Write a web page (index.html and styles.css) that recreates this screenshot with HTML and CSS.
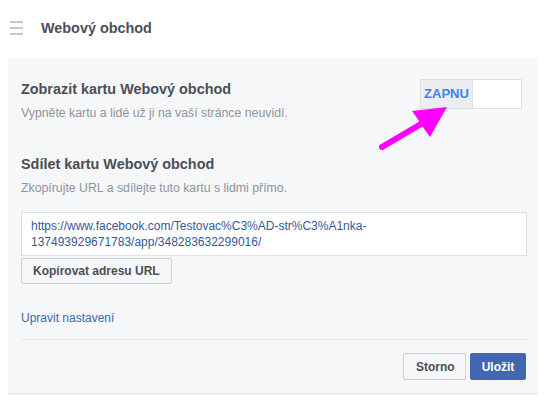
FILE: index.html
```html
<!DOCTYPE html>
<html>

<head>
    <meta charset="UTF-8">
    <meta name="viewport" content="width=device-width, initial-scale=1.0">
    <title>Webový obchod</title>
    <link rel="stylesheet" href="styles.css">
</head>

<body>

    <!-- =========== Header =========== -->
    <div class="topbar">
        <div class="burger">
            <span></span>
            <span></span>
            <span></span>
        </div>
        <h1 class="pageTitle">Webový obchod</h1>
    </div>

    <!-- =========== Settings panel =========== -->
    <div class="panel">
        <div class="row">
            <div class="rowText">
                <h2 class="heading">Zobrazit kartu Webový obchod</h2>
                <p class="hint">Vypněte kartu a lidé už ji na vaší stránce neuvidí.</p>
            </div>
            <div class="toggle">
                <span class="toggleOn">ZAPNU</span>
                <span class="toggleOff"></span>
            </div>
        </div>

        <div class="share">
            <h2 class="heading">Sdílet kartu Webový obchod</h2>
            <p class="hint">Zkopírujte URL a sdílejte tuto kartu s lidmi přímo.</p>
        </div>

        <div class="urlBox">https://www.facebook.com/Testovac%C3%AD-str%C3%A1nka-<br>137493929671783/app/348283632299016/</div>
        <button class="grayButton copyButton">Kopírovat adresu URL</button>

        <a class="editLink" href="#">Upravit nastavení</a>

        <div class="footer">
            <button class="grayButton">Storno</button>
            <button class="blueButton">Uložit</button>
        </div>
    </div>

    <!-- arrow drawn over the screenshot -->
    <svg class="arrow" width="547" height="400" viewBox="0 0 547 400">
        <polygon fill="#ff00ff"
            points="380.4,144.5 419.4,121.5 412,111 447,107 430,137 422.6,126.5 383.6,149.5" />
        <circle cx="382" cy="147" r="3" fill="#ff00ff" />
    </svg>

</body>

</html>
```

FILE: styles.css
```css
* {
    font-family: "Liberation Sans", Arial, sans-serif;
    margin: 0;
    padding: 0;
    box-sizing: border-box;
}

:root {
    --text: #4b4f56;
    --gray: #90949c;
    --panel: #f6f7f9;
    --line: #dddfe2;
    --link: #4267b2;
    --blue: #4267b2;
}

body {
    position: relative;
    width: 547px;
    height: 400px;
    background: #fff;
    overflow: hidden;
}

.topbar {
    height: 57px;
    display: flex;
    align-items: center;
    padding: 0 0 2px 10px;
}

.burger {
    width: 13px;
    display: flex;
    flex-direction: column;
    gap: 4px;
    margin-top: 1px;
}

.burger span {
    display: block;
    height: 2px;
    background: #c4c7cc;
}

.pageTitle {
    margin-left: 18px;
    font-size: 14.4px;
    font-weight: bold;
    color: var(--text);
}

.panel {
    margin: 0 9px 0 8px;
    background: var(--panel);
    border-bottom: 2px solid #ebedf0;
    padding: 22px 11px 13px 13px;
}

.row {
    display: flex;
    justify-content: space-between;
    align-items: flex-start;
}

.heading {
    font-size: 14.4px;
    line-height: 18px;
    font-weight: bold;
    color: var(--text);
}

.rowText .heading {
    margin-top: 1px;
}

.hint {
    margin-top: 7px;
    font-size: 12.3px;
    line-height: 16px;
    color: var(--gray);
}

.toggle {
    display: flex;
    height: 30px;
    margin-right: 5px;
    border: 1px solid var(--line);
    background: #fff;
}

.toggleOn {
    width: 52px;
    background: #ebedf0;
    border-right: 1px solid var(--line);
    color: #4080ff;
    font-size: 13px;
    font-weight: bold;
    line-height: 28px;
    text-align: center;
}

.toggleOff {
    width: 48px;
}

.share {
    margin-top: 34px;
}

.urlBox {
    margin-top: 16px;
    height: 44px;
    background: #fff;
    border: 1px solid var(--line);
    padding: 5px 9px;
    font-size: 12px;
    line-height: 16px;
    color: #365899;
}

.grayButton {
    height: 27px;
    padding: 0 12px;
    background: #f6f7f9;
    border: 1px solid #ced0d4;
    border-radius: 2px;
    color: var(--text);
    font-size: 12px;
    font-weight: bold;
}

.copyButton {
    display: block;
    height: 26px;
    margin-top: 2px;
    padding: 0 11px;
}

.editLink {
    display: block;
    margin-top: 26px;
    padding-bottom: 13px;
    border-bottom: 1px solid #e5e6e9;
    font-size: 12px;
    line-height: 16px;
    color: var(--link);
    text-decoration: none;
}

.footer {
    display: flex;
    justify-content: flex-end;
    gap: 4px;
    margin-top: 13px;
    padding-right: 1px;
}

.footer .grayButton {
    width: 63px;
}

.blueButton {
    width: 56px;
    height: 27px;
    background: var(--blue);
    border: 1px solid var(--blue);
    border-radius: 2px;
    color: #fff;
    font-size: 12px;
    font-weight: bold;
}

.arrow {
    position: absolute;
    top: 0;
    left: 0;
    pointer-events: none;
}
```
